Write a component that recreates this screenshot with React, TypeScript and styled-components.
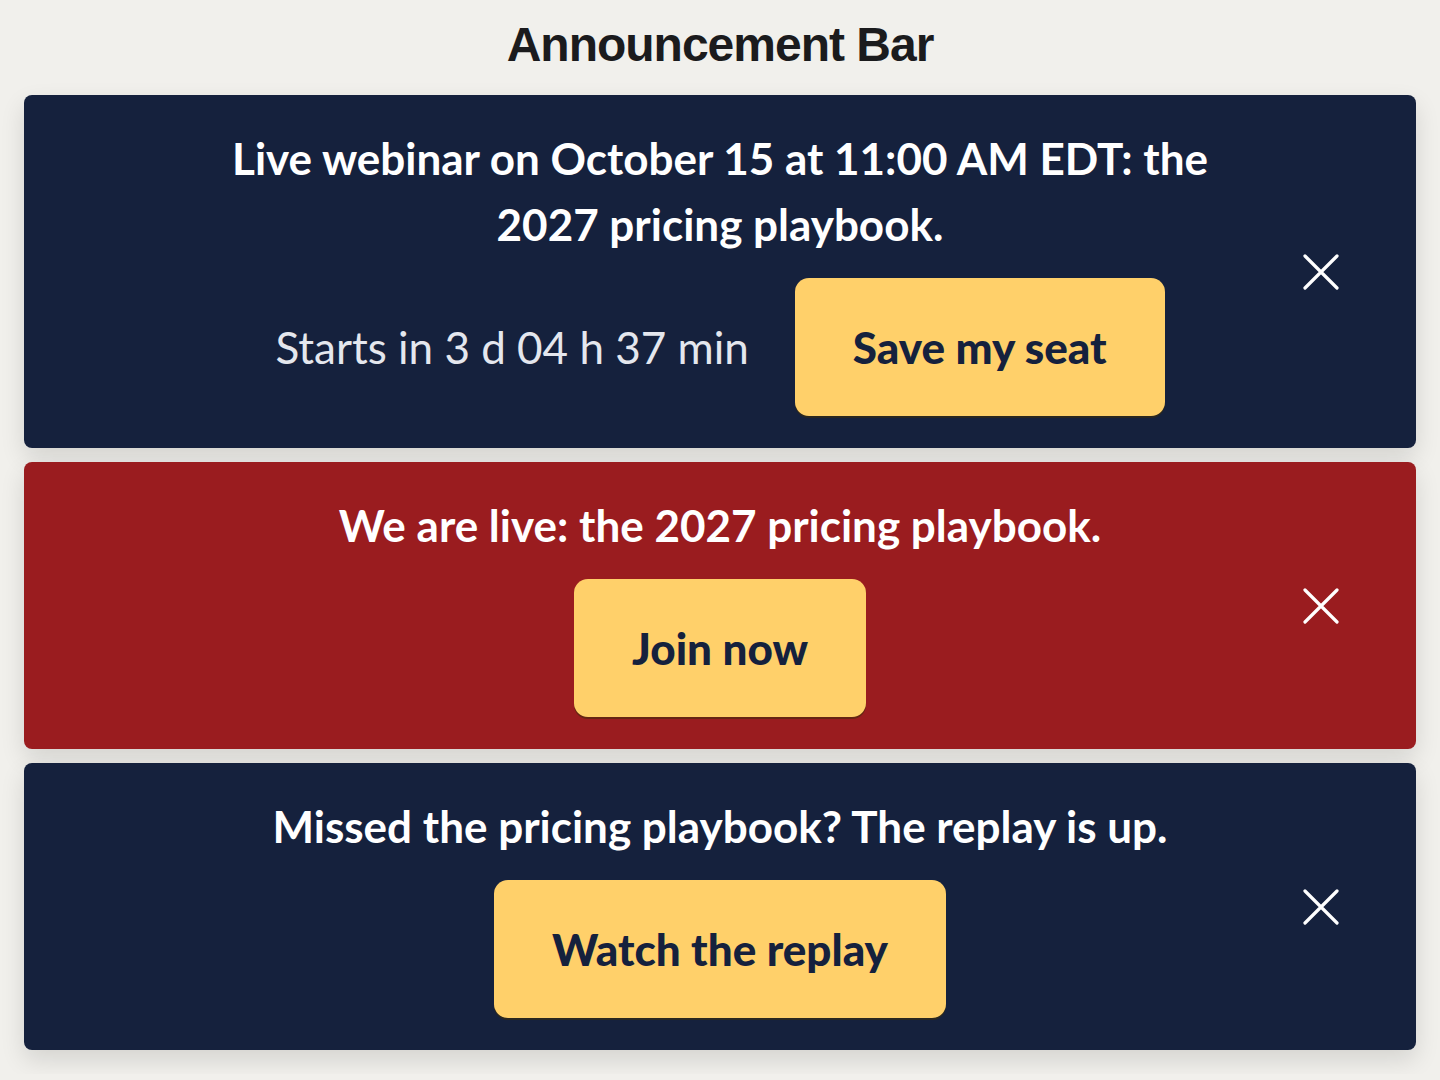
import styled, { createGlobalStyle } from 'styled-components';

const GlobalStyle = createGlobalStyle`
  html, body {
    margin: 0;
    padding: 0;
    background: #f1f0ec;
  }
`;

const Page = styled.main`
  padding: 16px 24px 24px;
  display: flex;
  flex-direction: column;
  gap: 14px;
  font-family: Lato, 'Open Sans', sans-serif;
`;

const Title = styled.h1`
  margin: 0 0 7px;
  text-align: center;
  font-family: 'Liberation Sans', Arial, sans-serif;
  font-size: 48px;
  line-height: 58px;
  font-weight: 700;
  letter-spacing: -1px;
  color: #1b1b1d;
`;

const Bar = styled.section<{ $tone: 'navy' | 'red' }>`
  position: relative;
  display: flex;
  flex-direction: column;
  align-items: center;
  gap: 21px;
  padding: 30px 180px 32px;
  border-radius: 8px;
  background: ${(p) => (p.$tone === 'red' ? '#9a1c1f' : '#15213d')};
  box-shadow: 0 10px 24px rgba(0, 0, 0, 0.12);
  color: #fff;
`;

const Message = styled.p`
  margin: 0;
  max-width: 1000px;
  text-align: center;
  font-size: 44px;
  line-height: 66px;
  font-weight: 700;
`;

const ActionRow = styled.div`
  display: flex;
  align-items: center;
  gap: 46px;
`;

const Countdown = styled.span`
  font-size: 44px;
  line-height: 66px;
  font-weight: 400;
  color: #e4e7ee;
`;

const Cta = styled.button`
  border: 0;
  border-radius: 14px;
  padding: 36px 58px;
  background: #ffd06a;
  box-shadow: 0 2px 0 rgba(60, 45, 10, 0.55);
  font-family: inherit;
  font-size: 44px;
  line-height: 66px;
  font-weight: 900;
  color: #15213d;
  cursor: pointer;
`;

const Close = styled.button`
  position: absolute;
  top: 50%;
  right: 71px;
  width: 48px;
  height: 48px;
  margin-top: -24px;
  display: flex;
  align-items: center;
  justify-content: center;
  padding: 0;
  border: 0;
  background: transparent;
  color: #fff;
  cursor: pointer;
`;

const CloseIcon = () => (
  <svg width="36" height="36" viewBox="0 0 36 36" fill="none">
    <path d="M2 2L34 34M34 2L2 34" stroke="currentColor" strokeWidth="3.2" strokeLinecap="round" />
  </svg>
);

const App = () => {
  return (
    <>
      <GlobalStyle />
      <Page>
        <Title>Announcement Bar</Title>

        <Bar $tone="navy">
          <Message>Live webinar on October 15 at 11:00 AM EDT: the 2027 pricing playbook.</Message>
          <ActionRow>
            <Countdown>Starts in 3 d 04 h 37 min</Countdown>
            <Cta>Save my seat</Cta>
          </ActionRow>
          <Close aria-label="Dismiss">
            <CloseIcon />
          </Close>
        </Bar>

        <Bar $tone="red">
          <Message>We are live: the 2027 pricing playbook.</Message>
          <Cta>Join now</Cta>
          <Close aria-label="Dismiss">
            <CloseIcon />
          </Close>
        </Bar>

        <Bar $tone="navy">
          <Message>Missed the pricing playbook? The replay is up.</Message>
          <Cta>Watch the replay</Cta>
          <Close aria-label="Dismiss">
            <CloseIcon />
          </Close>
        </Bar>
      </Page>
    </>
  );
};

export default App;
